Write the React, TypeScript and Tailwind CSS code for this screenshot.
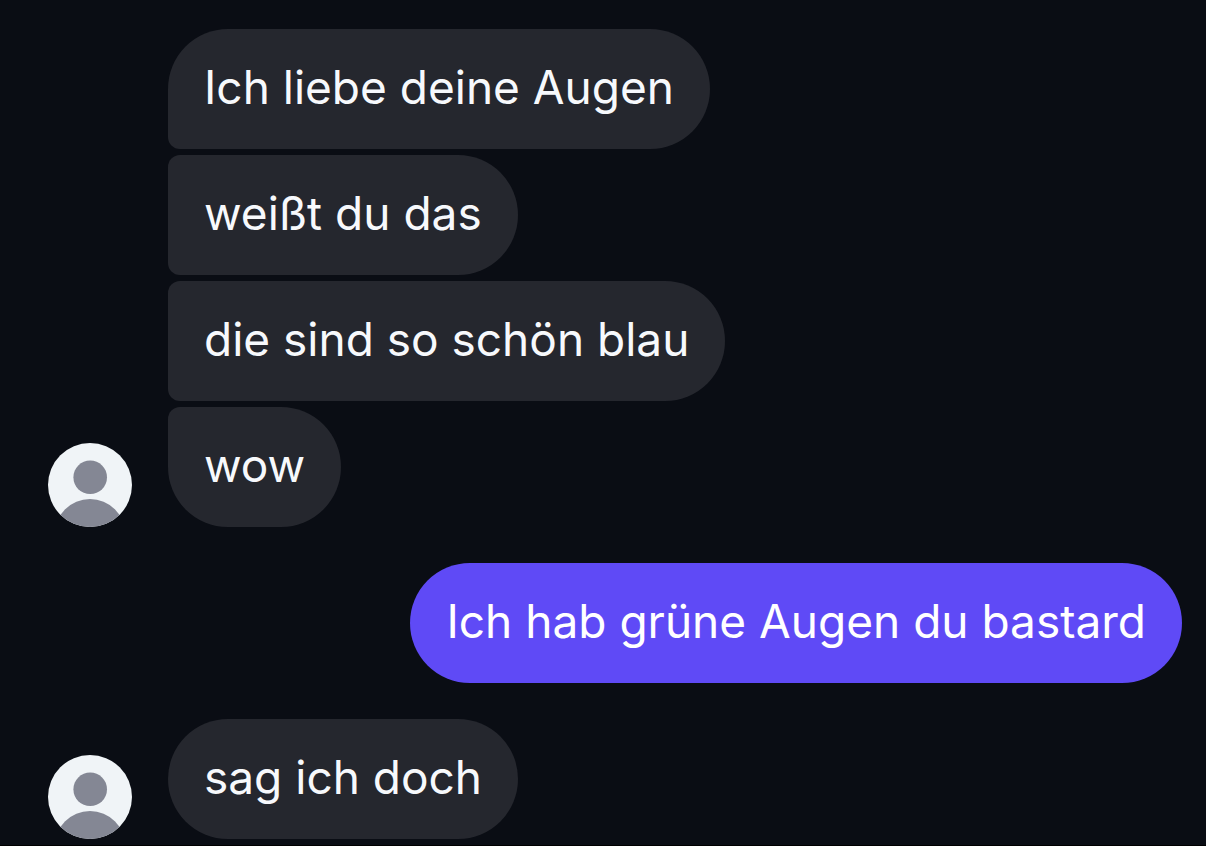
import React from 'react'
import clsx from 'clsx'

type Group = {
  from: 'them' | 'me'
  messages: string[]
}

const groups: Group[] = [
  {
    from: 'them',
    messages: ['Ich liebe deine Augen', 'weißt du das', 'die sind so schön blau', 'wow'],
  },
  { from: 'me', messages: ['Ich hab grüne Augen du bastard'] },
  { from: 'them', messages: ['sag ich doch'] },
]

const Avatar: React.FC = () => {
  return (
    <svg
      className="size-[84px] shrink-0 rounded-full bg-[#f0f4f7]"
      viewBox="0 0 84 84"
      fill="#848794"
      aria-hidden="true"
    >
      <circle cx="42.2" cy="34.3" r="16.8" />
      <circle cx="42" cy="91.5" r="35.5" />
    </svg>
  )
}

const MessageGroup: React.FC<Group> = ({ from, messages }) => {
  const mine = from === 'me'

  return (
    <li className={clsx('flex items-end gap-9', mine && 'justify-end')}>
      {!mine && <Avatar />}
      <ul className={clsx('flex min-w-0 flex-col gap-1.5', mine ? 'items-end' : 'items-start')}>
        {messages.map((message, i) => {
          const first = i === 0
          const last = i === messages.length - 1

          return (
            <li
              key={i}
              className={clsx(
                'rounded-[60px] px-9 pt-[22px] pb-[26px]',
                mine ? 'bg-[#5f4af6] text-white' : 'bg-[#25272e] text-[#f7f9fc]',
                !mine && !first && 'rounded-tl-xl',
                !mine && !last && 'rounded-bl-xl',
              )}
            >
              {message}
            </li>
          )
        })}
      </ul>
    </li>
  )
}

export default function App() {
  return (
    <main className="min-h-screen border-b border-black bg-[#0a0d14] pt-[29px] pr-6 pb-1.5 pl-12 font-['Inter',sans-serif] text-[46px] leading-[72px]">
      <ul className="flex flex-col gap-9">
        {groups.map((group, i) => (
          <MessageGroup key={i} {...group} />
        ))}
      </ul>
    </main>
  )
}
